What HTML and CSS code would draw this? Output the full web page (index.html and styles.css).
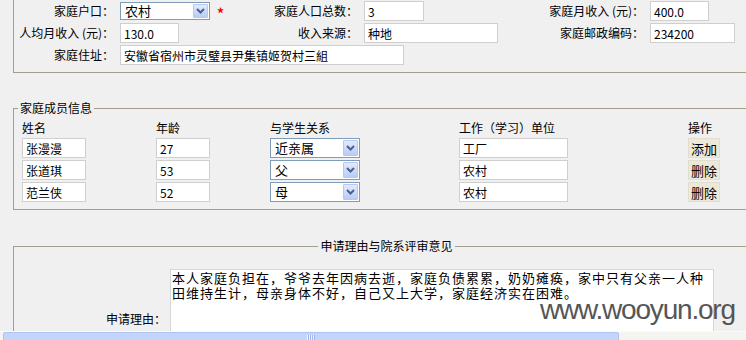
FILE: index.html
```html
<!DOCTYPE html>
<html lang="zh-CN">
<head>
  <meta charset="UTF-8">
  <title>家庭经济情况</title>
  <link rel="stylesheet" href="styles.css">
</head>
<body>

  <div class="page">

    <fieldset class="box box-base">
      <div class="base-grid">
        <label class="lbl">家庭户口：</label>
        <div class="field">
          <div class="sel sel-hukou">
            <span>农村</span>
            <i class="arrow"><svg width="9" height="6" viewBox="0 0 9 6"><path d="M1 1 L4.5 4.5 L8 1" fill="none" stroke="#4d6185" stroke-width="2"/></svg></i>
          </div>
          <span class="req">*</span>
        </div>
        <label class="lbl">家庭人口总数：</label>
        <div class="field"><input class="txt w60" value="3"></div>
        <label class="lbl">家庭月收入 (元)：</label>
        <div class="field"><input class="txt w59" value="400.0"></div>

        <label class="lbl">人均月收入 (元)：</label>
        <div class="field"><input class="txt w59" value="130.0"></div>
        <label class="lbl">收入来源：</label>
        <div class="field"><input class="txt w134" value="种地"></div>
        <label class="lbl">家庭邮政编码：</label>
        <div class="field"><input class="txt w85" value="234200"></div>

        <label class="lbl">家庭住址：</label>
        <div class="field wide"><input class="txt w284" value="安徽省宿州市灵璧县尹集镇姬贺村三組"></div>
      </div>
    </fieldset>

    <fieldset class="box box-members">
      <legend>家庭成员信息</legend>
      <div class="member-grid">
        <div class="head">姓名</div>
        <div class="head">年龄</div>
        <div class="head">与学生关系</div>
        <div class="head">工作（学习）单位</div>
        <div class="head">操作</div>

        <input class="txt w64" value="张漫漫">
        <input class="txt w54" value="27">
        <div class="sel sel-rel">
          <span>近亲属</span>
          <i class="arrow"><svg width="9" height="6" viewBox="0 0 9 6"><path d="M1 1 L4.5 4.5 L8 1" fill="none" stroke="#4d6185" stroke-width="2"/></svg></i>
        </div>
        <input class="txt w109" value="工厂">
        <button class="btn">添加</button>

        <input class="txt w64" value="张道琪">
        <input class="txt w54" value="53">
        <div class="sel sel-rel">
          <span>父</span>
          <i class="arrow"><svg width="9" height="6" viewBox="0 0 9 6"><path d="M1 1 L4.5 4.5 L8 1" fill="none" stroke="#4d6185" stroke-width="2"/></svg></i>
        </div>
        <input class="txt w109" value="农村">
        <button class="btn">删除</button>

        <input class="txt w64" value="范兰侠">
        <input class="txt w54" value="52">
        <div class="sel sel-rel">
          <span>母</span>
          <i class="arrow"><svg width="9" height="6" viewBox="0 0 9 6"><path d="M1 1 L4.5 4.5 L8 1" fill="none" stroke="#4d6185" stroke-width="2"/></svg></i>
        </div>
        <input class="txt w109" value="农村">
        <button class="btn">删除</button>
      </div>
    </fieldset>

    <fieldset class="box box-reason">
      <legend>申请理由与院系评审意见</legend>
      <div class="reason-grid">
        <label class="lbl">申请理由：</label>
        <textarea class="reason">本人家庭负担在，爷爷去年因病去逝，家庭负债累累，奶奶瘫痪，家中只有父亲一人种田维持生计，母亲身体不好，自己又上大学，家庭经济实在困难。</textarea>
      </div>
    </fieldset>

    <div class="watermark">www.wooyun.org</div>
  </div>

  <div class="hscroll">
    <div class="thumb"><span class="grip"></span></div>
  </div>

</body>
</html>
```

FILE: styles.css
```css
html, body {
  margin: 0;
  padding: 0;
  overflow: hidden;
}

body {
  background: #f0f0f0;
  font-family: "Noto Sans CJK SC", "Liberation Sans", sans-serif;
  font-size: 12px;
  color: #000;
}

.page {
  position: relative;
  height: 331px;
  overflow: hidden;
}

.box {
  box-sizing: border-box;
  width: 747px;
  min-width: 0;
  margin: 0 0 0 13px;
  padding: 0;
  border: 1px solid #a29e8b;
}

.box legend {
  margin-left: 4px;
  padding: 0 2px;
  line-height: 14px;
  font-size: 12px;
}

.box-base {
  margin-top: -12px;
  padding: 12px 0 7px;
}

.box-members {
  margin-top: 28px;
  padding: 0 0 7px;
}

.box-reason {
  margin-top: 29px;
  padding: 16px 0 0;
}

.box-reason legend {
  margin: 0 auto;
}

/* base info */
.base-grid {
  display: grid;
  grid-template-columns: 106px 150px 94px 140px 146px auto;
  grid-auto-rows: 20px;
  row-gap: 2px;
}

.lbl {
  white-space: nowrap;
  text-align: right;
  padding-right: 6px;
  line-height: 20px;
}

.field {
  display: flex;
  align-items: center;
}

.field.wide {
  grid-column: 2 / span 3;
}

.txt {
  box-sizing: border-box;
  height: 20px;
  margin: 0;
  padding: 0 3px;
  border: 1px solid #cfcfcf;
  background: #fff;
  font-family: "Noto Sans CJK SC", "Liberation Sans", sans-serif;
  font-size: 12px;
  color: #000;
  outline: none;
}

.w54 { width: 54px; }
.w59 { width: 59px; }
.w60 { width: 60px; }
.w64 { width: 64px; }
.w85 { width: 85px; }
.w109 { width: 109px; }
.w134 { width: 134px; }
.w284 { width: 284px; }

.sel {
  box-sizing: border-box;
  display: flex;
  align-items: stretch;
  justify-content: space-between;
  border: 1px solid #7f9db9;
  background: #fff;
  font-size: 13px;
}

.sel span {
  padding-left: 4px;
  line-height: 16px;
}

.sel-hukou {
  width: 90px;
  height: 18px;
}

.sel-rel {
  width: 90px;
  height: 20px;
}

.sel-rel span {
  line-height: 18px;
}

.arrow {
  box-sizing: border-box;
  width: 15px;
  margin: 1px;
  display: flex;
  align-items: center;
  justify-content: center;
  background: linear-gradient(#e2eafe, #b8ccf8);
  border: 1px solid #b7c8ef;
  border-radius: 1px;
}

.req {
  color: #f00;
  font-size: 14px;
  font-weight: bold;
  margin-left: 7px;
  line-height: 14px;
  padding-top: 4px;
}

/* family members */
.member-grid {
  display: grid;
  grid-template-columns: 134px 114px 189px 229px auto;
  grid-template-rows: 21px;
  grid-auto-rows: 20px;
  row-gap: 2px;
  padding-left: 8px;
  align-items: center;
  justify-items: start;
}

.head {
  line-height: 14px;
  padding-top: 4px;
}

.btn {
  box-sizing: border-box;
  width: 32px;
  height: 20px;
  padding: 0;
  margin: 0;
  border: 1px solid #e1ded0;
  background: #ece9d8;
  font-family: "Noto Sans CJK SC", sans-serif;
  font-size: 13px;
  color: #000;
}

/* reason */
.reason-grid {
  display: grid;
  grid-template-columns: 156px auto;
  align-items: center;
}

.reason-grid .lbl {
  padding-right: 4px;
}

.reason {
  box-sizing: border-box;
  width: 544px;
  height: 100px;
  margin: 0;
  padding: 0 1px;
  border: 1px solid #d6d6d6;
  background: #fff;
  font-family: "Noto Sans CJK SC", sans-serif;
  font-size: 13px;
  letter-spacing: 1px;
  line-height: 15px;
  resize: none;
  overflow: hidden;
  outline: none;
}

.watermark {
  position: absolute;
  left: 540px;
  top: 294px;
  font-family: "Liberation Sans", sans-serif;
  font-size: 28px;
  letter-spacing: -1.2px;
  color: #444;
  opacity: 0.9;
}

/* bottom scrollbar */
.hscroll {
  height: 17px;
  background: #f4f4f0;
  border-top: 1px solid #fbfbfb;
  display: flex;
}

.thumb {
  box-sizing: border-box;
  width: 616px;
  margin-left: 3px;
  background: #c4d5fc;
  border: 1px solid #aec3f4;
  border-radius: 2px;
  display: flex;
  justify-content: center;
}

.grip {
  width: 8px;
  height: 7px;
  margin-top: 2px;
  background: repeating-linear-gradient(90deg, #eef3fe 0 1px, #9db6ef 1px 2px);
}
```
